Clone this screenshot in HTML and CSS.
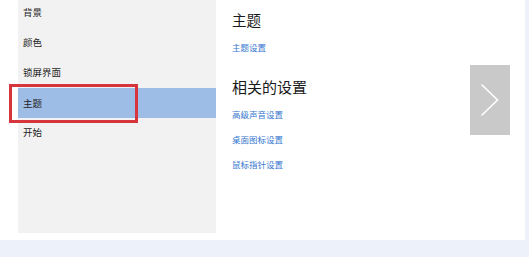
FILE: index.html
```html
<!DOCTYPE html>
<html lang="zh">
<head>
<meta charset="utf-8">
<link rel="stylesheet" href="styles.css">
</head>
<body>
<div class="window">
  <div class="main">
    <nav class="sidebar">
      <div class="item">背景</div>
      <div class="item">颜色</div>
      <div class="item">锁屏界面</div>
      <div class="item active">主题<span class="mark"></span></div>
      <div class="item">开始</div>
    </nav>
    <section class="content">
      <h2 class="title">主题</h2>
      <a class="link first">主题设置</a>
      <h2 class="title related">相关的设置</h2>
      <a class="link">高级声音设置</a>
      <a class="link">桌面图标设置</a>
      <a class="link">鼠标指针设置</a>
    </section>
    <div class="next">
      <svg width="40" height="70" viewBox="0 0 40 70"><path d="M11.5 19.5 L27.5 35 L11.5 50.5" fill="none" stroke="#fff" stroke-width="1.6"/></svg>
    </div>
    <div class="edge"></div>
  </div>
  <div class="footer"></div>
</div>
</body>
</html>
```
FILE: styles.css
```css
* { box-sizing: border-box; }
html, body { margin: 0; padding: 0; background: #fff; }
body { width: 529px; height: 257px; overflow: hidden; font-family: "Noto Sans CJK SC", "Microsoft YaHei", sans-serif; }
.window { display: flex; flex-direction: column; height: 257px; }
.main { display: flex; height: 240px; padding-left: 18px; }
.sidebar { width: 198px; height: 233px; background: #f2f2f2; }
.item { position: relative; height: 30px; line-height: 24px; padding-left: 5px; font-size: 9.5px; color: #1e1e1e; }
.item.active { background: #9ebde6; line-height: 30px; margin: -2px 0 2px; }
.item .mark { position: absolute; left: -9px; top: -4px; width: 129px; height: 39px; border: 3px solid #d7353d; }
.content { width: 254px; padding-left: 16px; padding-top: 9px; display: flex; flex-direction: column; align-items: flex-start; }
.title { margin: 0; font-weight: normal; font-size: 14.5px; color: #1a1a1a; line-height: 22px; }
.related { margin-top: 22px; font-size: 15px; }
.link { font-size: 8.5px; color: #3577cf; line-height: 14px; margin-top: 11px; }
.link.first { margin-top: 9px; }
.related + .link { margin-top: 9px; }
.next { margin-top: 65px; width: 40px; height: 70px; background: #c9c9c9; }
.next svg { display: block; }
.edge { margin-left: 15px; width: 4px; background: #edf1fa; }
.footer { height: 17px; background: #edf1fa; }
```
